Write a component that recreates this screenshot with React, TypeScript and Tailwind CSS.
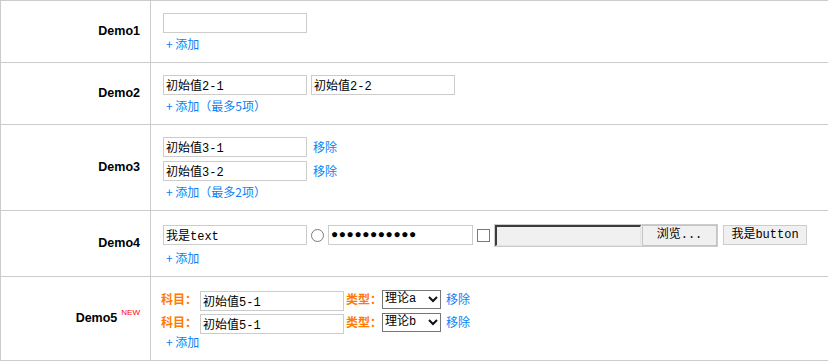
import { ReactNode } from "react";

const mono = "font-['Liberation_Mono','Noto_Sans_CJK_SC',monospace]";
const inputCls = `h-5 w-[144px] shrink-0 border border-[#cccccc] bg-white px-[2px] text-[12px] text-black outline-none ${mono}`;

const Field = ({ value = "" }: { value?: string }) => (
  <input className={inputCls} readOnly defaultValue={value} />
);

const Link = ({ children, className = "" }: { children: ReactNode; className?: string }) => (
  <span className={`cursor-pointer whitespace-nowrap text-[12px] text-[#0b7ff5] ${className}`}>{children}</span>
);

const AddLink = ({ text = "+ 添加" }: { text?: string }) => (
  <div className="h-[14px] pl-[3px] leading-[10px]">
    <Link>{text}</Link>
  </div>
);

const Row = ({
  label,
  isNew,
  children,
}: {
  label: string;
  isNew?: boolean;
  children: ReactNode;
}) => (
  <div className="flex border-b border-[#cccccc]">
    <div className="flex w-[150px] shrink-0 items-center justify-end border-r border-[#cccccc] pr-[10px]">
      <span className="font-['Liberation_Sans',Arial,sans-serif] text-[12.5px] font-bold text-black">
        {label}
        {isNew && (
          <span className="ml-1 align-top text-[8px] font-normal leading-none text-[#ff0000]">NEW</span>
        )}
      </span>
    </div>
    <div className="flex-1 pb-[11px] pl-3 pt-3">{children}</div>
  </div>
);

const Select = ({ value }: { value: string }) => (
  <div className="flex h-[19px] w-[59px] shrink-0 items-center justify-between border border-[#767676] bg-white pl-[2px] pr-[2px]">
    <span className={`text-[12px] text-black ${mono}`}>{value}</span>
    <svg width="10" height="7" viewBox="0 0 10 7">
      <polyline points="1,1 5,5 9,1" fill="none" stroke="#111" strokeWidth="2" />
    </svg>
  </div>
);

const Demo5Line = ({ value, type }: { value: string; type: string }) => (
  <div className="-ml-[2px] mb-[3px] flex h-5 items-center">
    <span className="w-[36px] shrink-0 whitespace-nowrap font-['Noto_Sans_CJK_SC',sans-serif] text-[12px] font-bold text-[#ff7a00]">
      科目：
    </span>
    <span className="ml-[3px]">
      <Field value={value} />
    </span>
    <span className="ml-[2px] w-[36px] shrink-0 whitespace-nowrap font-['Noto_Sans_CJK_SC',sans-serif] text-[12px] font-bold text-[#ff7a00]">
      类型：
    </span>
    <Select value={type} />
    <Link className="ml-[5px]">移除</Link>
  </div>
);

export default function App() {
  return (
    <div className="h-[362px] w-[828px] overflow-hidden bg-white font-['Noto_Sans_CJK_SC',sans-serif]">
      <div className="border-l border-t border-[#cccccc]">
        <Row label="Demo1">
          <div className="mb-1 flex h-5 items-center">
            <Field />
          </div>
          <AddLink />
        </Row>

        <Row label="Demo2">
          <div className="mb-1 flex h-5 items-center gap-1">
            <Field value="初始值2-1" />
            <Field value="初始值2-2" />
          </div>
          <AddLink text="+ 添加（最多5项）" />
        </Row>

        <Row label="Demo3">
          <div className="mb-1 flex h-5 items-center gap-1">
            <Field value="初始值3-1" />
            <Link className="ml-[2px]">移除</Link>
          </div>
          <div className="mb-1 flex h-5 items-center gap-1">
            <Field value="初始值3-2" />
            <Link className="ml-[2px]">移除</Link>
          </div>
          <AddLink text="+ 添加（最多2项）" />
        </Row>

        <Row label="Demo4">
          <div className="mb-1 flex h-6 items-center gap-1">
            <Field value="我是text" />
            <input
              type="radio"
              className="h-[13px] w-[13px] shrink-0 appearance-none rounded-full border border-[#7a7a7a] bg-white"
            />
            <input
              type="text"
              readOnly
              defaultValue="●●●●●●●●●●●"
              className={`${inputCls} w-[145px] text-[11px] tracking-[0.6px]`}
            />
            <input
              type="checkbox"
              className="h-[13px] w-[13px] shrink-0 appearance-none border border-[#7a7a7a] bg-white"
            />
            <div className="flex h-[23px] w-[224px] shrink-0 gap-[1px] border border-[#cccccc] bg-[#f0f0f0]">
              <div className="w-[146px] border-b border-l-2 border-r border-t-2 border-b-[#e3e3e3] border-l-[#3c3c3c] border-r-[#e3e3e3] border-t-[#3c3c3c] bg-[#f0f0f0]" />
              <div className={`flex flex-1 items-center justify-center border border-[#c4c4c4] bg-[#f0f0f0] text-[12px] text-black ${mono}`}>
                浏览...
              </div>
            </div>
            <button
              className={`ml-[1px] h-5 w-[84px] shrink-0 border border-[#cccccc] bg-[#f0f0f0] text-[12px] text-black ${mono}`}
            >
              我是button
            </button>
          </div>
          <AddLink />
        </Row>

        <Row label="Demo5" isNew>
          <Demo5Line value="初始值5-1" type="理论a" />
          <Demo5Line value="初始值5-1" type="理论b" />
          <div className="mt-[1px]">
            <AddLink />
          </div>
        </Row>
      </div>
    </div>
  );
}
